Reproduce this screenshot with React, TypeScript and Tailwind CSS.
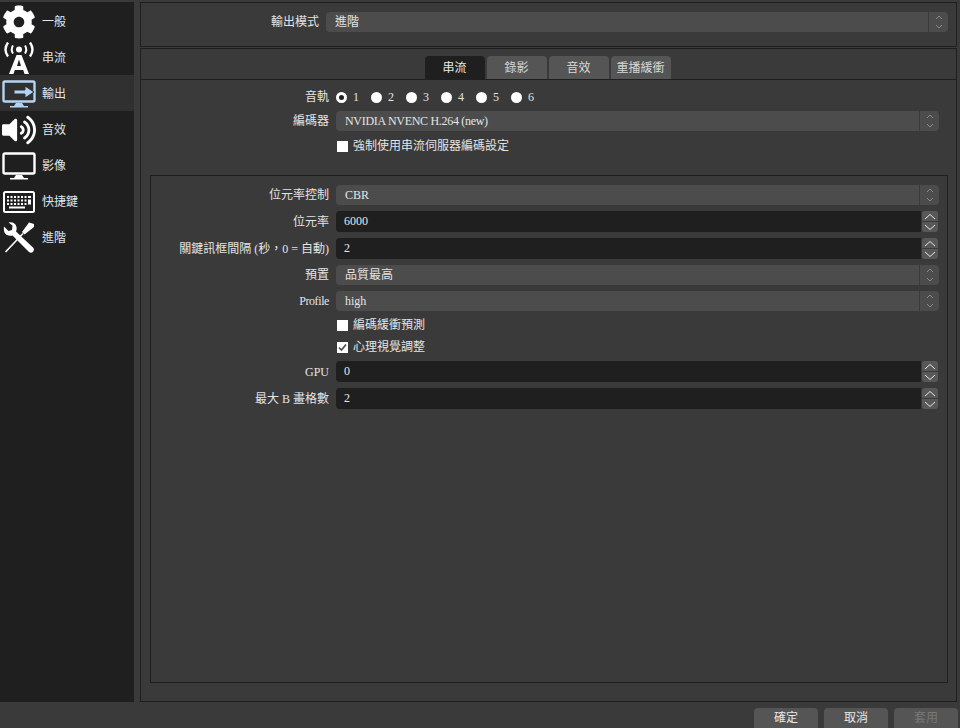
import { FaCog, FaVolumeUp } from "react-icons/fa";
import type { ReactNode } from "react";

const Antenna = () => (
  <svg viewBox="0 0 34 32" className="h-[32px] w-[34px]" fill="none">
    <circle cx="17" cy="7.5" r="3" fill="white" />
    <path d="M11 3.5 Q8.5 7.5 11 11.5 M23 3.5 Q25.5 7.5 23 11.5" stroke="white" strokeWidth="2" />
    <path d="M6 0.5 Q1 7.5 6 14.5 M28 0.5 Q33 7.5 28 14.5" stroke="white" strokeWidth="2.4" />
    <path d="M14.5 13 H19.5 L27 32 H22.5 L21.2 28 H12.8 L11.5 32 H7 Z M15 24 H19 L17 17.5 Z" fill="white" fillRule="evenodd" />
  </svg>
);

const Monitor = ({ color, arrow }: { color: string; arrow?: boolean }) => (
  <svg viewBox="0 0 34 28" className="h-[28px] w-[34px]" fill="none">
    <rect x="1.5" y="1.5" width="31" height="20" rx="1.5" stroke={color} strokeWidth="2.4" />
    <path d="M12 26 L14 23 H20 L22 26 H26 V27.5 H8 V26 Z" fill={color} />
    {arrow && <path d="M12 10 H23 V6 L32 12 L23 18 V14 H12 Z" fill={color} stroke="#303030" strokeWidth="1" />}
  </svg>
);

const Keyboard = () => (
  <svg viewBox="0 0 32 22" className="h-[22px] w-[32px]" fill="none">
    <rect x="1" y="1" width="30" height="20" rx="1.5" stroke="white" strokeWidth="2" />
    <path
      d="M4 5h2v2H4zM7.5 5h2v2h-2zM11 5h2v2h-2zM14.5 5h2v2h-2zM18 5h2v2h-2zM21.5 5h2v2h-2zM25 5h3v2h-3zM4 8.5h2v2H4zM7.5 8.5h2v2h-2zM11 8.5h2v2h-2zM14.5 8.5h2v2h-2zM18 8.5h2v2h-2zM21.5 8.5h2v2h-2zM25 8.5h3v5h-3zM4 12h2v2H4zM7.5 12h2v2h-2zM11 12h2v2h-2zM14.5 12h2v2h-2zM18 12h2v2h-2zM21.5 12h2v2h-2zM6 15.5h16v2H6z"
      fill="white"
    />
  </svg>
);

const Tools = () => (
  <svg viewBox="0 0 32 32" className="h-[32px] w-[32px]" fill="none">
    <path d="M31 2 L26 0.5 L19 10 L21.5 12.5 L31 5 Z" fill="white" />
    <path d="M20 11.5 L2.5 30" stroke="white" strokeWidth="1.6" />
    <path d="M1 4.5 L5.5 9 L9 8 L9.5 3.5 L5.5 0.5 Q12 -0.5 13.5 5 Q14 7.5 13 9.5 L30.5 26 Q31.5 28 30 30 Q28 31.5 26 30 L9.5 13.5 Q4 14.5 1.5 10.5 Q0.5 7.5 1 4.5 Z" fill="white" />
  </svg>
);

const NavItem = ({ icon, label, active, mt }: { icon: ReactNode; label: string; active?: boolean; mt?: string }) => (
  <div className={`flex h-[36px] items-center pt-[2px] ${active ? "bg-[#303030]" : ""} ${mt ?? ""}`}>
    <div className="flex w-[38px] shrink-0 items-center justify-center">{icon}</div>
    <span className="ml-[4px] text-[#dfe6ee]">{label}</span>
  </div>
);

const Chevrons = () => (
  <svg viewBox="0 0 8 16" className="h-[16px] w-[8px]" fill="none" stroke="#8a8a8a" strokeWidth="1">
    <path d="M1 5 L4 2 L7 5 M1 11 L4 14 L7 11" />
  </svg>
);

const Combo = ({ value }: { value: ReactNode }) => (
  <div className="flex h-[20px] flex-1 items-stretch rounded-[4px] bg-[#4c4c4c]">
    <span className="flex flex-1 items-center pl-[9px] text-[#e4e4e4]">{value}</span>
    <div className="flex w-[20px] items-center justify-center border-l border-[#3a3a3a]">
      <Chevrons />
    </div>
  </div>
);

const Spin = ({ value }: { value: string }) => (
  <div className="mr-px flex h-[21px] flex-1 items-stretch">
    <span className="flex flex-1 items-center rounded-l-[4px] bg-[#1f1f1f] pb-px pl-[8px] text-[#e8e8e8]">{value}</span>
    <div className="ml-px flex w-[16px] flex-col gap-px">
      <div className="flex flex-1 items-center justify-center rounded-t-[3px] bg-[#585858]">
        <svg viewBox="0 0 12 7" className="h-[7px] w-[12px]" fill="none" stroke="#e6e6e6" strokeWidth="1">
          <path d="M1 6 L6 1.5 L11 6" />
        </svg>
      </div>
      <div className="flex flex-1 items-center justify-center rounded-b-[3px] bg-[#585858]">
        <svg viewBox="0 0 12 7" className="h-[7px] w-[12px]" fill="none" stroke="#e6e6e6" strokeWidth="1">
          <path d="M1 1 L6 5.5 L11 1" />
        </svg>
      </div>
    </div>
  </div>
);

const Row = ({ label, mt, labelW, children }: { label?: ReactNode; mt: string; labelW: string; children: ReactNode }) => (
  <div className={`flex w-full items-center ${mt}`}>
    <span className={`mr-[7px] shrink-0 text-right text-[#e4e4e4] ${labelW}`}>{label}</span>
    {children}
  </div>
);

const Check = ({ label, checked }: { label: string; checked?: boolean }) => (
  <div className="flex h-[18px] items-center pl-px">
    <span className="flex h-[11px] w-[11px] items-center justify-center bg-white">
      {checked && (
        <svg viewBox="0 0 11 11" className="h-[11px] w-[11px]" fill="none" stroke="#4a4a4a" strokeWidth="1.6">
          <path d="M2 5.5 L4.5 8 L9 2.5" />
        </svg>
      )}
    </span>
    <span className="ml-[5px] text-[#e4e4e4]">{label}</span>
  </div>
);

const Tab = ({ label, active }: { label: string; active?: boolean }) => (
  <div
    className={`flex h-[23px] w-[60px] items-center justify-center rounded-t-[4px] ${
      active ? "bg-[#1f1f1f] text-[#e8e8e8]" : "bg-[#555555] text-[#d8d8d8]"
    }`}
  >
    {label}
  </div>
);

const FooterButton = ({ label, disabled }: { label: string; disabled?: boolean }) => (
  <div
    className={`flex h-[20px] w-[64px] items-center justify-center rounded-t-[4px] bg-[#555555] ${
      disabled ? "text-[#777777]" : "text-[#e8e8e8]"
    }`}
  >
    {label}
  </div>
);

export default function App() {
  return (
    <div className="flex h-[728px] w-[960px] flex-col overflow-hidden bg-[#3a3a3a] text-[12px] [font-family:'Liberation_Serif','Noto_Sans_CJK_TC',serif]">
      <div className="flex h-[702px]">
        {/* Sidebar */}
        <div className="mt-[2px] w-[134px] shrink-0 bg-[#1f1f1f]">
          <NavItem icon={<FaCog className="h-[34px] w-[34px] text-white" />} label="一般" mt="mt-[1px]" />
          <NavItem icon={<Antenna />} label="串流" />
          <NavItem icon={<Monitor color="#b4d4f4" arrow />} label="輸出" active />
          <NavItem icon={<FaVolumeUp className="h-[32px] w-[34px] text-white" />} label="音效" />
          <NavItem icon={<Monitor color="white" />} label="影像" />
          <NavItem icon={<Keyboard />} label="快捷鍵" />
          <NavItem icon={<Tools />} label="進階" />
        </div>

        {/* Settings */}
        <div className="ml-[6px] mt-[2px] flex w-[817px] flex-col">
          <div className="flex h-[46px] items-start border border-[#1f1f1f] pt-[9px]">
            <Row label="輸出模式" mt="" labelW="w-[178px]">
              <div className="mr-[8px] flex flex-1">
                <Combo value="進階" />
              </div>
            </Row>
          </div>

          <div className="mt-px flex h-[654px] flex-col border border-[#1f1f1f]">
            <div className="flex justify-center gap-[2px] border-b border-[#1f1f1f] pr-[2px] pt-[7px]">
              <Tab label="串流" active />
              <Tab label="錄影" />
              <Tab label="音效" />
              <Tab label="重播緩衝" />
            </div>

            <div className="flex flex-1 flex-col pr-[17px]">
              <Row label="音軌" mt="mt-[8px] h-[18px]" labelW="w-[188px]">
                <div className="flex">
                  {["1", "2", "3", "4", "5", "6"].map((n, i) => (
                    <div key={n} className="flex w-[35px] items-center">
                      <span className={`h-[11px] w-[11px] rounded-full ${i === 0 ? "border-[3px] border-white bg-[#1f1f1f]" : "bg-white"}`} />
                      <span className="ml-[6px] text-[#e4e4e4]">{n}</span>
                    </div>
                  ))}
                </div>
              </Row>
              <Row label="編碼器" mt="mt-[5px]" labelW="w-[188px]">
                <Combo value={<span className="tracking-[-0.3px]">NVIDIA NVENC H.264 (new)</span>} />
              </Row>
              <Row mt="mt-[6px]" labelW="w-[188px]">
                <Check label="強制使用串流伺服器編碼設定" />
              </Row>
            </div>

            {/* Group box */}
            <div className="mb-[18px] ml-[9px] mr-[8px] mt-[20px] flex h-[508px] flex-col border border-[#1f1f1f] pr-[8px] pt-[9px]">
              <Row label="位元率控制" mt="" labelW="w-[178px]">
                <Combo value="CBR" />
              </Row>
              <Row label="位元率" mt="mt-[6px]" labelW="w-[178px]">
                <Spin value="6000" />
              </Row>
              <Row label="關鍵訊框間隔 (秒，0 = 自動)" mt="mt-[6px]" labelW="w-[178px]">
                <Spin value="2" />
              </Row>
              <Row label="預置" mt="mt-[6px]" labelW="w-[178px]">
                <Combo value="品質最高" />
              </Row>
              <Row label={<span className="tracking-[-0.4px]">Profile</span>} mt="mt-[6px]" labelW="w-[178px]">
                <Combo value="high" />
              </Row>
              <Row mt="mt-[5px]" labelW="w-[178px]">
                <Check label="編碼緩衝預測" />
              </Row>
              <Row mt="mt-[4px]" labelW="w-[178px]">
                <Check label="心理視覺調整" checked />
              </Row>
              <Row label="GPU" mt="mt-[5px]" labelW="w-[178px]">
                <Spin value="0" />
              </Row>
              <Row label="最大 B 畫格數" mt="mt-[6px]" labelW="w-[178px]">
                <Spin value="2" />
              </Row>
            </div>
          </div>
        </div>
      </div>

      {/* Footer */}
      <div className="flex flex-1 items-end justify-end gap-[6px] pr-[2px]">
        <FooterButton label="確定" />
        <FooterButton label="取消" />
        <FooterButton label="套用" disabled />
      </div>
    </div>
  );
}
